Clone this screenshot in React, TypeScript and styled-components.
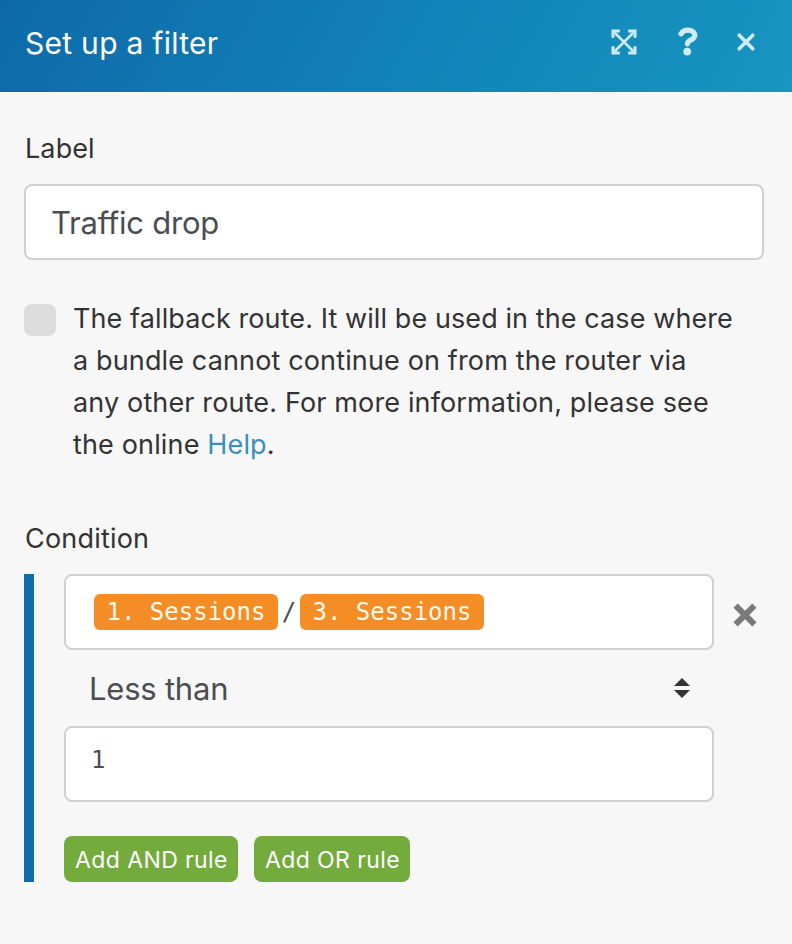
import React from 'react';
import styled, { createGlobalStyle } from 'styled-components';

const GlobalStyle = createGlobalStyle`
  *, *::before, *::after { box-sizing: border-box; }
  body {
    margin: 0;
    background: #f7f7f7;
    color: #333;
    font-family: Inter, "Liberation Sans", sans-serif;
  }
  svg { display: block; }
  button { font: inherit; border: 0; margin: 0; padding: 0; background: none; cursor: pointer; }
`;

const Panel = styled.main`
  width: 792px;
  height: 944px;
  overflow: hidden;
  background: #f7f7f7;
`;

const Header = styled.header`
  display: flex;
  align-items: center;
  justify-content: space-between;
  height: 92px;
  padding: 0 36px 9px 25px;
  background: linear-gradient(120deg, #0e69a9 0%, #1184b8 55%, #1895c0 100%);
`;

const Title = styled.h1`
  margin: 0;
  padding-top: 3px;
  font-size: 30px;
  font-weight: 400;
  line-height: 40px;
  letter-spacing: 0.28px;
  color: #fff;
`;

const HeaderActions = styled.div`
  display: flex;
  align-items: center;
`;

const IconButton = styled.button<{ $gap?: number }>`
  margin-left: ${({ $gap = 0 }) => $gap}px;
  color: #cfebf7;
`;

const Body = styled.div`
  padding: 37px 28px 0 24px;
`;

const FieldLabel = styled.div<{ $spacing?: number }>`
  height: 40px;
  padding-left: 1px;
  font-size: 27px;
  line-height: 40px;
  letter-spacing: ${({ $spacing = 0 }) => $spacing}px;
`;

const Box = styled.div`
  display: flex;
  height: 76px;
  border: 2px solid #d0d0d0;
  border-radius: 8px;
  background: #fff;
  color: #4b4d52;
`;

const LabelBox = styled(Box)`
  align-items: center;
  margin-top: 15px;
  padding: 0 25px;
  font-size: 31px;
  letter-spacing: -0.22px;
`;

const Fallback = styled.div`
  display: flex;
  gap: 17px;
  margin-top: 38px;
`;

const Checkbox = styled.span`
  flex: none;
  width: 32px;
  height: 32px;
  margin-top: 6px;
  border-radius: 8px;
  background: #dcdcdc;
`;

const Description = styled.p`
  margin: 0;
  font-size: 27px;
  line-height: 42px;
  white-space: nowrap;
`;

const Line = styled.span<{ $spacing: number }>`
  display: block;
  letter-spacing: ${({ $spacing }) => $spacing}px;
`;

const HelpLink = styled.a`
  color: #3a8fbd;
`;

const ConditionSection = styled.section`
  margin-top: 53px;
`;

const ConditionGroup = styled.div`
  display: flex;
  height: 308px;
  margin-top: 15px;
  border-left: 10px solid #0e6dab;
  padding-left: 30px;
`;

const Rule = styled.div`
  width: 650px;
`;

const Mono = styled(Box)`
  font-family: "DejaVu Sans Mono", monospace;
  font-size: 24px;
  line-height: 36px;
`;

const ExpressionBox = styled(Mono)`
  padding: 18px 28px;
`;

const ValueBox = styled(Mono)`
  padding: 14px 25px;
`;

const Tag = styled.span`
  width: 184px;
  height: 36px;
  border-radius: 6px;
  background: #f48d25;
  color: #fffaf0;
  text-align: center;
`;

const Operator = styled.span`
  width: 22px;
  text-align: center;
`;

const Select = styled.div`
  display: flex;
  align-items: center;
  justify-content: space-between;
  height: 76px;
  padding: 0 24px 0 25px;
  font-size: 31px;
  letter-spacing: -0.22px;
  color: #4b4d52;
`;

const Buttons = styled.div`
  display: flex;
  gap: 16px;
  margin-top: 34px;
`;

const AddButton = styled.button<{ $width: number }>`
  width: ${({ $width }) => $width}px;
  height: 46px;
  padding: 2px 0 0 1px;
  border-radius: 8px;
  background: #73ab3c;
  color: #fff;
  font-size: 23px;
  letter-spacing: 0.4px;
  white-space: nowrap;
`;

const RemoveButton = styled.button`
  align-self: flex-start;
  margin: 29px 0 0 19px;
  color: #7a7a7a;
`;

const ExpandIcon = () => (
  <svg width="26" height="26" viewBox="0 0 26 26" fill="none" stroke="currentColor">
    <path d="M4 4 22 22M22 4 4 22" strokeWidth="2.5" />
    <path
      d="M2 8.8V2H8.8M17.2 2H24V8.8M24 17.2V24H17.2M8.8 24H2V17.2"
      strokeWidth="3"
    />
    <path d="M1 1H7L1 7ZM25 1V7L19 1ZM25 25H19L25 19ZM1 25V19L7 25Z" fill="currentColor" stroke="none" />
  </svg>
);

const QuestionIcon = () => (
  <svg width="20" height="29" viewBox="0 0 20 29" fill="none">
    <path
      d="M3 6.8C4.6 4.2 7 3.2 9.8 3.2C14 3.2 16.8 5.2 16.8 8.6C16.8 13.1 9.8 12.6 9.4 16.8"
      stroke="currentColor"
      strokeWidth="5.2"
      strokeLinecap="round"
    />
    <circle cx="9.2" cy="24.6" r="3.9" fill="currentColor" />
  </svg>
);

const CloseIcon = () => (
  <svg width="20" height="20" viewBox="0 0 20 20" stroke="currentColor" strokeWidth="3.6" strokeLinecap="round">
    <path d="M3.2 3.2 16.8 16.8M16.8 3.2 3.2 16.8" />
  </svg>
);

const RemoveIcon = () => (
  <svg width="24" height="24" viewBox="0 0 24 24" stroke="currentColor" strokeWidth="6">
    <path d="M2.6 2.6 21.4 21.4M21.4 2.6 2.6 21.4" />
  </svg>
);

const SortIcon = () => (
  <svg width="16" height="20" viewBox="0 0 16 20" fill="#333">
    <path d="M8 0 16 8H0ZM0 12H16L8 20Z" />
  </svg>
);

export default function App() {
  return (
    <>
      <GlobalStyle />
      <Panel>
        <Header>
          <Title>Set up a filter</Title>
          <HeaderActions>
            <IconButton aria-label="Expand"><ExpandIcon /></IconButton>
            <IconButton aria-label="Help" $gap={41}><QuestionIcon /></IconButton>
            <IconButton aria-label="Close" $gap={38}><CloseIcon /></IconButton>
          </HeaderActions>
        </Header>
        <Body>
          <FieldLabel $spacing={0.1}>Label</FieldLabel>
          <LabelBox>Traffic drop</LabelBox>
          <Fallback>
            <Checkbox role="checkbox" aria-checked="false" />
            <Description>
              <Line $spacing={0.09}>The fallback route. It will be used in the case where</Line>
              <Line $spacing={0.14}>a bundle cannot continue on from the router via</Line>
              <Line $spacing={0.14}>any other route. For more information, please see</Line>
              <Line $spacing={0.15}>the online <HelpLink>Help</HelpLink>.</Line>
            </Description>
          </Fallback>
          <ConditionSection>
            <FieldLabel $spacing={0.2}>Condition</FieldLabel>
            <ConditionGroup>
              <Rule>
                <ExpressionBox>
                  <Tag>1. Sessions</Tag>
                  <Operator>/</Operator>
                  <Tag>3. Sessions</Tag>
                </ExpressionBox>
                <Select>
                  Less than
                  <SortIcon />
                </Select>
                <ValueBox>1</ValueBox>
                <Buttons>
                  <AddButton $width={174}>Add AND rule</AddButton>
                  <AddButton $width={156}>Add OR rule</AddButton>
                </Buttons>
              </Rule>
              <RemoveButton aria-label="Remove rule"><RemoveIcon /></RemoveButton>
            </ConditionGroup>
          </ConditionSection>
        </Body>
      </Panel>
    </>
  );
}
